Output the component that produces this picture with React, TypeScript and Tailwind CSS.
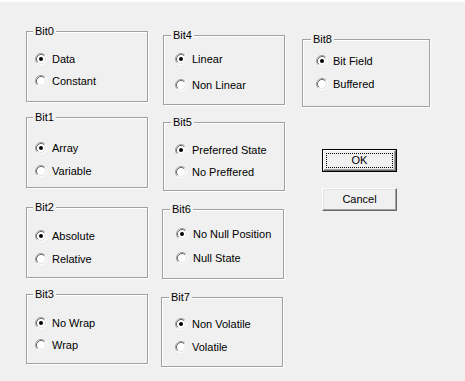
import React from "react";

type Group = {
  label: string;
  options: string[];
  box: string; // margin + size of the etched frame
  body: string; // padding + gap of the radio rows
  legend: string;
};

const col1: Group[] = [
  { label: "Bit0", options: ["Data", "Constant"], box: "mt-[31px] h-[71px]", body: "pt-[21px] gap-[10px] pl-[8px]", legend: "left-[6px]" },
  { label: "Bit1", options: ["Array", "Variable"], box: "mt-[15px] h-[71px]", body: "pt-[24px] gap-[11px] pl-[8px]", legend: "left-[6px]" },
  { label: "Bit2", options: ["Absolute", "Relative"], box: "mt-[19px] h-[71px]", body: "pt-[22px] gap-[11px] pl-[8px]", legend: "left-[6px]" },
  { label: "Bit3", options: ["No Wrap", "Wrap"], box: "mt-[16px] h-[70px]", body: "pt-[22px] gap-[10px] pl-[8px]", legend: "left-[6px]" },
];

const col2: Group[] = [
  { label: "Bit4", options: ["Linear", "Non Linear"], box: "mt-[35px] h-[70px]", body: "pt-[17px] gap-[14px] pl-[11px]", legend: "left-[7px]" },
  { label: "Bit5", options: ["Preferred State", "No Preffered"], box: "mt-[17px] h-[69px]", body: "pt-[21px] gap-[10px] pl-[11px]", legend: "left-[7px]" },
  { label: "Bit6", options: ["No Null Position", "Null State"], box: "mt-[18px] h-[70px] -ml-[1px]", body: "pt-[18px] gap-[12px] pl-[13px]", legend: "left-[7px]" },
  { label: "Bit7", options: ["Non Volatile", "Volatile"], box: "mt-[18px] h-[70px] -ml-[2px]", body: "pt-[20px] gap-[11px] pl-[13px]", legend: "left-[7px]" },
];

const bit8: Group = {
  label: "Bit8",
  options: ["Bit Field", "Buffered"],
  box: "mt-[39px] h-[68px]",
  body: "pt-[15px] gap-[11px] pl-[13px]",
  legend: "left-[8px]",
};

function Radio({ checked }: { checked: boolean }) {
  return (
    <svg width="12" height="12" viewBox="0 0 12 12" className="shrink-0">
      <circle cx="6" cy="6" r="5" fill="#fff" />
      <path d="M2.11 9.89 A5.5 5.5 0 0 1 9.89 2.11" fill="none" stroke="#a0a0a0" strokeWidth="1" />
      <path d="M9.89 2.11 A5.5 5.5 0 0 1 2.11 9.89" fill="none" stroke="#ffffff" strokeWidth="1" />
      <path d="M2.82 9.18 A4.5 4.5 0 0 1 9.18 2.82" fill="none" stroke="#696969" strokeWidth="1" />
      <path d="M9.18 2.82 A4.5 4.5 0 0 1 2.82 9.18" fill="none" stroke="#e3e3e3" strokeWidth="1" />
      {checked && <circle cx="6" cy="6" r="2" fill="#000" />}
    </svg>
  );
}

function GroupBox({ g }: { g: Group }) {
  return (
    <div
      className={`relative w-[122px] border border-[#a0a0a0] shadow-[inset_1px_1px_0_#fff,1px_1px_0_#fff] ${g.box}`}
    >
      <span className={`absolute -top-[7px] ${g.legend} bg-[#f0f0f0] px-[2px] leading-[13px]`}>
        {g.label}
      </span>
      <div className={`flex flex-col ${g.body}`}>
        {g.options.map((o, i) => (
          <div key={o} className="flex h-[12px] items-center gap-[5px] leading-[12px]">
            <Radio checked={i === 0} />
            <span className="whitespace-nowrap">{o}</span>
          </div>
        ))}
      </div>
    </div>
  );
}

export default function App() {
  return (
    <div className="flex h-[381px] w-[465px] bg-[#f0f0f0] font-['Liberation_Sans',Arial,sans-serif] text-[11px] text-black shadow-[inset_0_1px_0_#fff,inset_0_2px_0_#fafafa]">
      <div className="ml-[26px] flex flex-col">
        {col1.map((g) => (
          <GroupBox key={g.label} g={g} />
        ))}
      </div>

      <div className="ml-[15px] flex flex-col">
        {col2.map((g) => (
          <GroupBox key={g.label} g={g} />
        ))}
      </div>

      <div className="ml-[17px] flex w-[128px] flex-col">
        <div className="relative h-[68px] w-[128px] mt-[39px] border border-[#a0a0a0] shadow-[inset_1px_1px_0_#fff,1px_1px_0_#fff]">
          <span className={`absolute -top-[7px] ${bit8.legend} bg-[#f0f0f0] px-[2px] leading-[13px]`}>
            {bit8.label}
          </span>
          <div className={`flex flex-col ${bit8.body}`}>
            {bit8.options.map((o, i) => (
              <div key={o} className="flex h-[12px] items-center gap-[5px] leading-[12px]">
                <Radio checked={i === 0} />
                <span className="whitespace-nowrap">{o}</span>
              </div>
            ))}
          </div>
        </div>

        {/* default button: black frame + focus rectangle */}
        <button className="ml-[20px] mt-[42px] h-[23px] w-[75px] border border-black p-0">
          <div className="flex h-full w-full border border-t-white border-l-white border-r-[#696969] border-b-[#696969] p-[2px] shadow-[inset_-1px_-1px_0_#a0a0a0]">
            <div className="flex flex-1 items-center justify-center border border-dotted border-black leading-[11px]">
              OK
            </div>
          </div>
        </button>

        <button className="ml-[20px] mt-[16px] flex h-[23px] w-[75px] items-center justify-center border border-t-white border-l-white border-r-[#696969] border-b-[#696969] p-0 shadow-[inset_-1px_-1px_0_#a0a0a0,inset_1px_1px_0_#e3e3e3]">
          Cancel
        </button>
      </div>
    </div>
  );
}
